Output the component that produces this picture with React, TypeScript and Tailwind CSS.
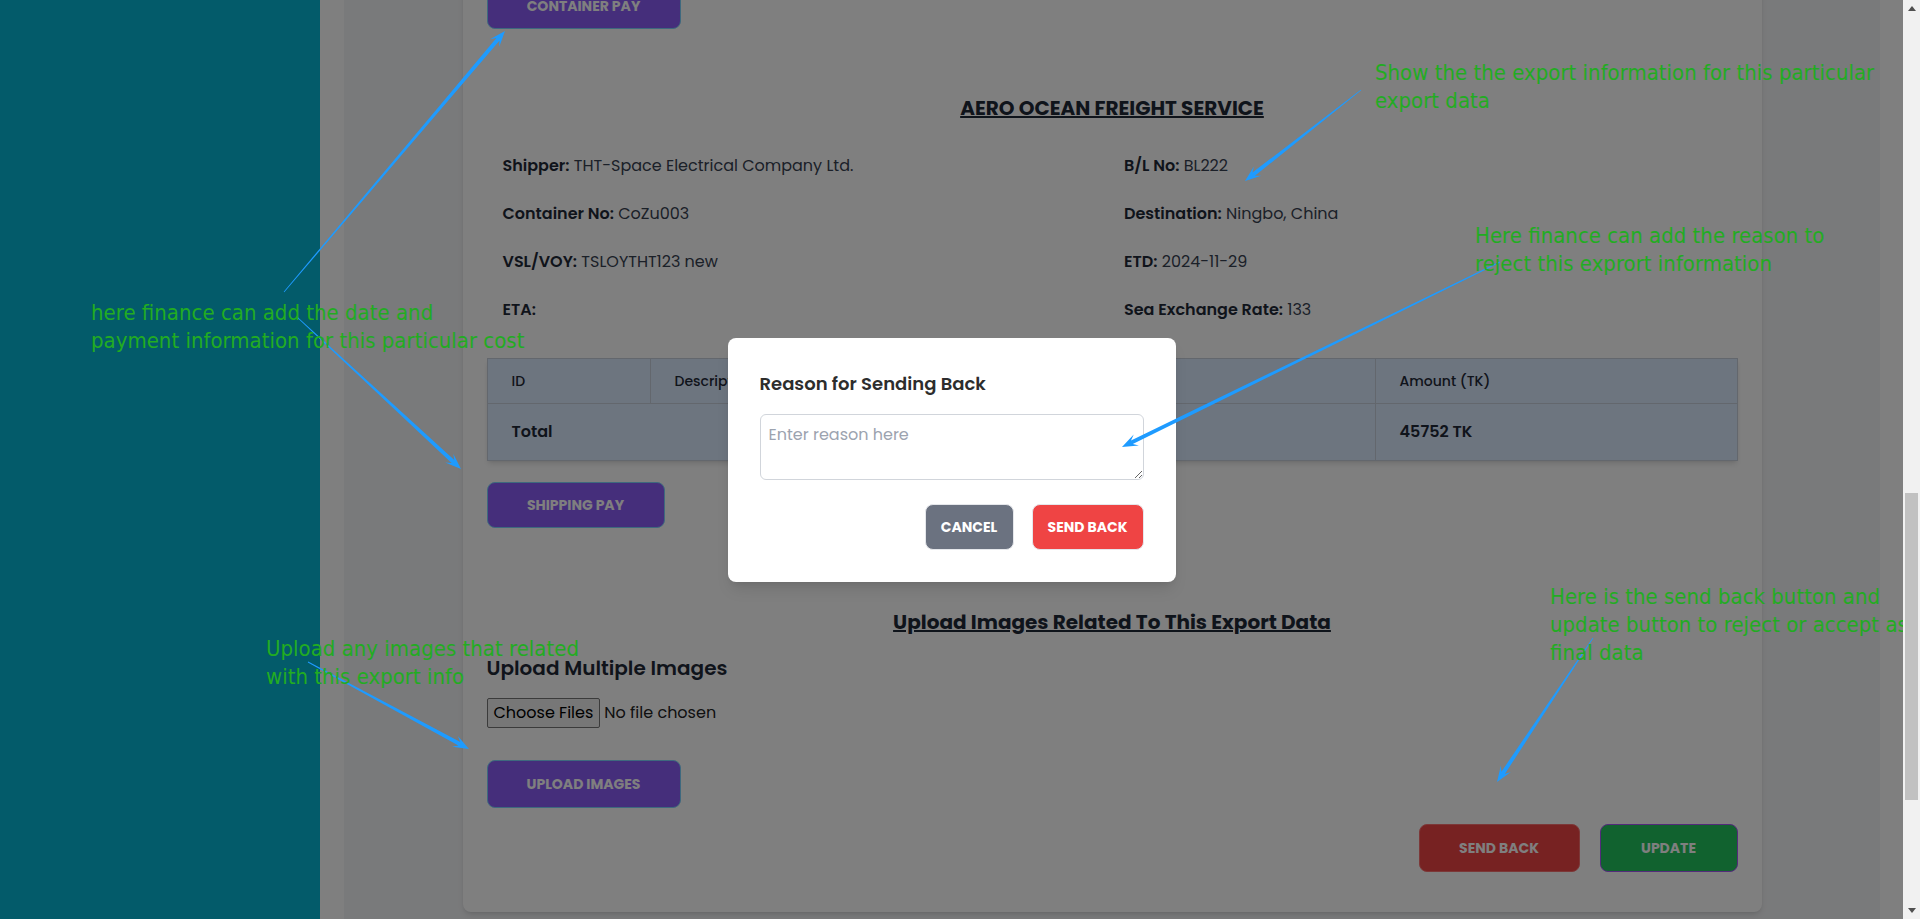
import React from "react";

type Pt = [number, number];

// hand drawn blue arrows from the annotation tool
const Arrow = ({ from, to }: { from: Pt; to: Pt }) => {
  const [x1, y1] = from;
  const [x2, y2] = to;
  const len = Math.hypot(x2 - x1, y2 - y1);
  const ux = (x2 - x1) / len;
  const uy = (y2 - y1) / len;
  const nx = -uy;
  const ny = ux;
  const head = 16;
  const hw = 6;
  const sw = 2;
  const tw = 0.4;
  const jx = x2 - ux * (head - 5);
  const jy = y2 - uy * (head - 5);
  const bx = x2 - ux * head;
  const by = y2 - uy * head;
  const pts = [
    [x1 + nx * tw, y1 + ny * tw],
    [jx + nx * sw, jy + ny * sw],
    [bx + nx * hw, by + ny * hw],
    [x2, y2],
    [bx - nx * hw, by - ny * hw],
    [jx - nx * sw, jy - ny * sw],
    [x1 - nx * tw, y1 - ny * tw],
  ]
    .map((p) => p.map((v) => v.toFixed(1)).join(","))
    .join(" ");
  return <polygon points={pts} fill="#1e9bff" />;
};

const Note = ({ className, lines }: { className: string; lines: string[] }) => (
  <div
    className={
      "absolute whitespace-nowrap text-[22px] leading-[28px] text-[#22ac22] font-['Liberation_Sans_Narrow','DejaVu_Sans_Condensed','Open_Sans',sans-serif] " +
      className
    }
  >
    {lines.map((l) => (
      <div key={l}>{l}</div>
    ))}
  </div>
);

const info = [
  ["Shipper:", "THT-Space Electrical Company Ltd."],
  ["B/L No:", "BL222"],
  ["Container No:", "CoZu003"],
  ["Destination:", "Ningbo, China"],
  ["VSL/VOY:", "TSLOYTHT123 new"],
  ["ETD:", "2024-11-29"],
  ["ETA:", ""],
  ["Sea Exchange Rate:", "133"],
];

const Scrollbar = () => (
  <div className="flex h-full w-[17px] flex-col bg-[#f1f1f1]">
    <div className="flex h-[17px] items-center justify-center">
      <svg width="8" height="5" viewBox="0 0 8 5">
        <path d="M4 0 8 5H0Z" fill="#505050" />
      </svg>
    </div>
    <div className="h-[476px]"></div>
    <div className="mx-[2px] h-[307px] bg-[#c1c1c1]"></div>
    <div className="flex-1"></div>
    <div className="flex h-[17px] items-center justify-center">
      <svg width="8" height="5" viewBox="0 0 8 5">
        <path d="M0 0H8L4 5Z" fill="#505050" />
      </svg>
    </div>
  </div>
);

export default function App() {
  return (
    <div className="flex h-[919px] w-[1920px] overflow-hidden font-['Poppins','Inter',sans-serif]">
      <div className="relative flex h-full w-[1903px] overflow-hidden">
        <div className="h-full w-80 shrink-0 bg-[#06b6d4]"></div>

        <div className="h-full flex-1 bg-white pl-6 pr-[23px]">
          <div className="flex h-full flex-col items-center justify-end overflow-hidden bg-[#f3f4f6] pb-[7px]">
            <div className="flex w-[1299px] shrink-0 flex-col rounded-b-lg bg-white px-6 pb-10 shadow-md">
              <button className="h-[46px] w-[194px] self-start rounded-lg border border-[#7dd3fc] bg-[#8b5cf6] text-sm font-bold text-white">
                CONTAINER PAY
              </button>

              <h2 className="mt-[65px] text-center text-xl font-bold leading-7 text-[#1f2937] underline">
                AERO OCEAN FREIGHT SERVICE
              </h2>

              <div className="mt-8 grid grid-cols-2 gap-x-6 gap-y-6 px-4 text-base leading-6">
                {info.map(([k, v]) => (
                  <p key={k} className="text-[#374151]">
                    <span className="font-semibold text-[#1f2937]">{k}</span> {v}
                  </p>
                ))}
              </div>

              <table className="mt-9 w-full table-fixed border-collapse border border-[#c7cfdb] bg-[#dbeafe] text-left shadow-md">
                <thead>
                  <tr>
                    <th className="w-[163px] border border-[#c7cfdb] px-6 py-3 text-sm font-medium leading-5 text-[#1f2937]">
                      ID
                    </th>
                    <th className="w-[400px] border border-[#c7cfdb] px-6 py-3 text-sm font-medium leading-5 text-[#1f2937]">
                      Description
                    </th>
                    <th className="w-[325px] border border-[#c7cfdb] px-6 py-3 text-sm font-medium leading-5 text-[#1f2937]">
                      Amount (USD)
                    </th>
                    <th className="border border-[#c7cfdb] px-6 py-3 text-sm font-medium leading-5 text-[#1f2937]">
                      Amount (TK)
                    </th>
                  </tr>
                </thead>
                <tbody>
                  <tr>
                    <td colSpan={3} className="border border-[#c7cfdb] px-6 py-4 text-base font-semibold leading-6 text-[#1f2937]">
                      Total
                    </td>
                    <td className="border border-[#c7cfdb] px-6 py-4 text-base font-semibold leading-6 text-[#1f2937]">
                      45752 TK
                    </td>
                  </tr>
                </tbody>
              </table>

              <button className="mt-[21px] h-[46px] w-[178px] self-start rounded-lg border border-[#7dd3fc] bg-[#8b5cf6] text-sm font-bold text-white">
                SHIPPING PAY
              </button>

              <h2 className="mt-20 text-center text-xl font-bold leading-7 text-[#1f2937] underline">
                Upload Images Related To This Export Data
              </h2>

              <h3 className="mt-[18px] text-xl font-semibold leading-7 text-[#1f2937]">
                Upload Multiple Images
              </h3>

              <input
                type="file"
                multiple
                className="mt-4 self-start text-base leading-6 text-[#222] file:mr-1 file:rounded-[2px] file:border file:border-[#767676] file:bg-[#efefef] file:px-1.5 file:py-0.5 file:text-base file:text-black"
              />

              <button className="mt-8 h-12 w-[194px] self-start rounded-lg border border-[#7dd3fc] bg-[#8b5cf6] text-sm font-bold text-white">
                UPLOAD IMAGES
              </button>

              <div className="mt-4 flex justify-end gap-5">
                <button className="h-12 w-[161px] rounded-lg border border-[#f87171] bg-[#ef4444] text-sm font-bold text-white">
                  SEND BACK
                </button>
                <button className="h-12 w-[138px] rounded-lg border border-[#a855f7] bg-[#22c55e] text-sm font-bold text-white">
                  UPDATE
                </button>
              </div>
            </div>
          </div>
        </div>

        {/* modal backdrop */}
        <div className="absolute inset-0 flex items-center justify-center bg-black/50">
          <div className="w-[448px] rounded-lg bg-white p-8 shadow-lg">
            <h3 className="text-lg font-semibold leading-7 text-[#2d2d2d]">Reason for Sending Back</h3>
            <textarea
              rows={2}
              placeholder="Enter reason here"
              className="mt-4 block h-[66px] w-full rounded-md border border-[#d1d5db] p-2 text-base leading-6 placeholder:text-[#9ca3af]"
            />
            <div className="mt-6 flex justify-end gap-[18px]">
              <button className="h-[46px] w-[89px] rounded-lg border border-[#e5e7eb] bg-[#6b7280] text-sm font-bold text-white">
                CANCEL
              </button>
              <button className="h-[46px] w-[112px] rounded-lg border border-[#e5e7eb] bg-[#ef4444] text-sm font-bold text-white">
                SEND BACK
              </button>
            </div>
          </div>
        </div>

        {/* annotations */}
        <div className="pointer-events-none absolute inset-0">
          <svg className="absolute inset-0" width="1903" height="919">
            <Arrow from={[284, 292]} to={[505, 31]} />
            <Arrow from={[297, 317]} to={[461, 469]} />
            <Arrow from={[1361, 90]} to={[1245, 181]} />
            <Arrow from={[1500, 262]} to={[1122, 447]} />
            <Arrow from={[308, 662]} to={[469, 749]} />
            <Arrow from={[1593, 638]} to={[1497, 782]} />
          </svg>
          <Note className="left-[1375px] top-[59px]" lines={["Show the the export information for this particular", "export data"]} />
          <Note className="left-[1475px] top-[222px]" lines={["Here finance can add the reason to", "reject this exprort information"]} />
          <Note className="left-[91px] top-[299px]" lines={["here finance can add the date and", "payment information for this particular cost"]} />
          <Note className="left-[266px] top-[635px]" lines={["Upload any images that related", "with this export info"]} />
          <Note
            className="left-[1550px] top-[583px]"
            lines={["Here is the send back button and", "update button to reject or accept as", "final data"]}
          />
        </div>
      </div>
      <Scrollbar />
    </div>
  );
}
